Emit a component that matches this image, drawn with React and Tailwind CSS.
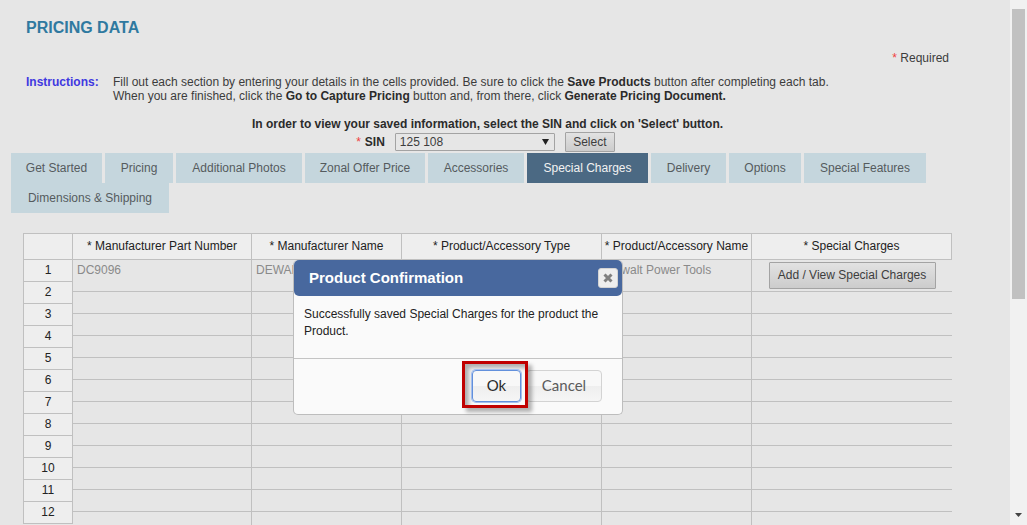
import { useState } from 'react';

const tabs = [
  { name: 'Get Started', width: 'w-[91px]' },
  { name: 'Pricing', width: 'w-[68px]' },
  { name: 'Additional Photos', width: 'w-[126px]' },
  { name: 'Zonal Offer Price', width: 'w-[120px]' },
  { name: 'Accessories', width: 'w-24' },
  { name: 'Special Charges', width: 'w-[121px]' },
  { name: 'Delivery', width: 'w-[75px]' },
  { name: 'Options', width: 'w-[72px]' },
  { name: 'Special Features', width: 'w-[122px]' },
  { name: 'Dimensions & Shipping', width: 'w-[158px]' },
];

const columns = [
  'Manufacturer Part Number',
  'Manufacturer Name',
  'Product/Accessory Type',
  'Product/Accessory Name',
  'Special Charges',
];

const rows = Array.from({ length: 12 }, (_, i) => i + 1);

const grayButton =
  'rounded-[1px] border border-[#a3a3a3] bg-linear-to-b from-[#e2e2e2] to-[#cccccc] text-[#3d3d3d]';

function PageHeader() {
  return (
    <header className="pl-[15px]">
      <h1 className="pt-[18px] text-base leading-5 font-bold text-[#2f79a0]">PRICING DATA</h1>
      <p className="mt-3 pr-[3px] text-right leading-4">
        <span className="text-[#f04040]">*</span> Required
      </p>
      <div className="mt-[9px] flex leading-[14px]">
        <h2 className="w-[87px] shrink-0 font-bold text-[#4038e0]">Instructions:</h2>
        <p className="text-[#3c3c3c]">
          Fill out each section by entering your details in the cells provided. Be sure to click the{' '}
          <b className="text-[#2b2b2b]">Save Products</b> button after completing each tab.
          <br />
          When you are finished, click the <b className="text-[#2b2b2b]">Go to Capture Pricing</b> button
          and, from there, click <b className="text-[#2b2b2b]">Generate Pricing Document.</b>
        </p>
      </div>
    </header>
  );
}

function SinForm() {
  return (
    <form className="mt-[14px] flex flex-col items-center pl-3" onSubmit={(e) => e.preventDefault()}>
      <p className="leading-[14px] font-bold text-[#2b2b2b]">
        In order to view your saved information, select the SIN and click on 'Select' button.
      </p>
      <div className="mt-px flex items-center pr-1">
        <label htmlFor="sin" className="mr-[10px] font-bold text-[#2b2b2b]">
          <span className="mr-1 font-normal text-[#f04040]">*</span>SIN
        </label>
        <div className="relative mr-[10px]">
          <select
            id="sin"
            className="block h-[18px] w-[160px] appearance-none rounded-[1px] border border-[#a3a3a3] bg-[#e6e6e6] pl-1 leading-4 text-[#3d3d3d]"
          >
            <option>125 108</option>
          </select>
          <svg className="pointer-events-none absolute top-[6px] right-[6px] h-[6px] w-[7px]" viewBox="0 0 7 6" aria-hidden="true">
            <path d="M0 0h7L3.5 6z" fill="#222" />
          </svg>
        </div>
        <button type="submit" className={`${grayButton} h-5 w-[50px]`}>
          Select
        </button>
      </div>
    </form>
  );
}

function Tabs() {
  return (
    <nav className="mt-px flex flex-wrap gap-x-[3px]">
      {tabs.map(({ name, width }) => (
        <a
          key={name}
          href="#"
          className={`${width} text-center leading-[30px] ${
            name === 'Special Charges' ? 'bg-[#4b6983] text-[#f2f2f2]' : 'bg-[#c5d6dd] text-[#555b5e]'
          }`}
        >
          {name}
        </a>
      ))}
    </nav>
  );
}

function ProductGrid() {
  const line = 'border-[#c0c0c0]';
  return (
    <div className="mt-5 flex items-start pl-3 text-[#222]">
      <table className={`w-[50px] shrink-0 border-separate border-spacing-0 border-l bg-[#eeeeee] ${line}`}>
        <thead>
          <tr>
            <td className={`h-[27px] border-t border-r border-b ${line}`} />
          </tr>
        </thead>
        <tbody>
          {rows.map((n) => (
            <tr key={n}>
              <th scope="row" className={`h-[22px] border-r border-b p-0 pb-[2px] text-center leading-4 font-normal ${line}`}>
                {n}
              </th>
            </tr>
          ))}
        </tbody>
      </table>
      <table className="w-full table-fixed border-separate border-spacing-0">
        <colgroup>
          <col className="w-[179px]" />
          <col className="w-[150px]" />
          <col className="w-[200px]" />
          <col className="w-[150px]" />
          <col />
        </colgroup>
        <thead>
          <tr>
            {columns.map((c) => (
              <th
                key={c}
                scope="col"
                className={`h-[27px] border-t border-r border-b bg-[#eeeeee] p-0 pb-[2px] text-center leading-4 font-normal whitespace-nowrap ${line}`}
              >
                * {c}
              </th>
            ))}
          </tr>
        </thead>
        <tbody>
          <tr className="align-top leading-5 text-[#8a8a8a]">
            <td className={`h-8 border-r border-b px-1 py-0 ${line}`}>DC9096</td>
            <td className={`border-r border-b px-1 py-0 ${line}`}>DEWALT</td>
            <td className={`border-r border-b px-1 py-0 ${line}`} />
            <td className={`border-r border-b px-1 py-0 ${line}`}>Dewalt Power Tools</td>
            <td className={`border-b px-1 py-0 pt-[2px] text-center ${line}`}>
              <button type="button" className={`${grayButton} mx-auto block h-[27px] w-[167px] pb-[2px]`}>
                Add / View Special Charges
              </button>
            </td>
          </tr>
          {rows.slice(1).map((n) => (
            <tr key={n}>
              {columns.map((c, i) => (
                <td key={c} className={`h-[22px] border-b p-0 ${line} ${i < 4 ? 'border-r' : ''}`} />
              ))}
            </tr>
          ))}
        </tbody>
      </table>
    </div>
  );
}

function ConfirmDialog({ onClose }) {
  const button =
    "h-8 rounded border bg-[linear-gradient(#f8f8f8_50%,#eeeeee_50%,#f6f6f6)] font-[Lato,sans-serif] text-[15px]";
  return (
    <div
      role="dialog"
      aria-labelledby="dialog-title"
      className="absolute top-[260px] left-[293px] w-[330px] rounded-[5px] border border-t-0 border-[#bdbdbd] bg-[#fafafa] text-[#222]"
    >
      <div className="flex h-9 items-center justify-between rounded-[5px] bg-[#48689e] pr-1 pl-[15px]">
        <h2 id="dialog-title" className="text-[15px] font-bold text-white">
          Product Confirmation
        </h2>
        <button
          type="button"
          aria-label="Close"
          onClick={onClose}
          className="grid size-5 place-items-center rounded-[3px] border border-[#d3d3d3] bg-[#eeeeee]"
        >
          <svg className="size-[10px]" viewBox="0 0 10 10" aria-hidden="true">
            <path d="M1.5 1.5l7 7M8.5 1.5l-7 7" stroke="#808080" strokeWidth="3" />
          </svg>
        </button>
      </div>
      <p className="h-[62px] px-[10px] pt-[10px] leading-[17px]">
        Successfully saved Special Charges for the product the Product.
      </p>
      <div className="flex h-14 justify-end border-t border-[#c4c4c4] pr-5">
        <div className="z-10 mt-[2px] h-[47px] w-[66px] border-3 border-[#c00000] py-[6px] pr-1 pl-[7px] shadow-[4px_4px_4px_rgba(0,0,0,0.3),inset_4px_4px_4px_rgba(0,0,0,0.3)]">
          <button
            type="button"
            onClick={onClose}
            className={`${button} w-full border-[#6290dc] text-[#2b2b2b] shadow-[0_0_0_1px_#a4bfee]`}
          >
            Ok
          </button>
        </div>
        <button
          type="button"
          onClick={onClose}
          className={`${button} -ml-[2px] mt-[11px] w-[76px] border-[#d3d3d3] text-[#5c5c5c]`}
        >
          Cancel
        </button>
      </div>
    </div>
  );
}

export default function App() {
  const [open, setOpen] = useState(true);
  return (
    <div className="relative flex h-screen overflow-hidden bg-[#e6e6e6] font-['Liberation_Sans',Arial,sans-serif] text-xs text-[#3c3c3c]">
      <main className="min-w-0 flex-1 pr-[58px] pl-[11px]">
        <PageHeader />
        <SinForm />
        <Tabs />
        <ProductGrid />
      </main>
      <div className="flex w-[17px] shrink-0 flex-col items-center justify-between bg-[#f1f1f1] pt-[9px] pb-2" aria-hidden="true">
        <div className="h-[290px] w-[13px] bg-[#c1c1c1]" />
        <svg className="h-1 w-[7px]" viewBox="0 0 7 4">
          <path d="M0 0h7L3.5 4z" fill="#444" />
        </svg>
      </div>
      {open && <ConfirmDialog onClose={() => setOpen(false)} />}
    </div>
  );
}
